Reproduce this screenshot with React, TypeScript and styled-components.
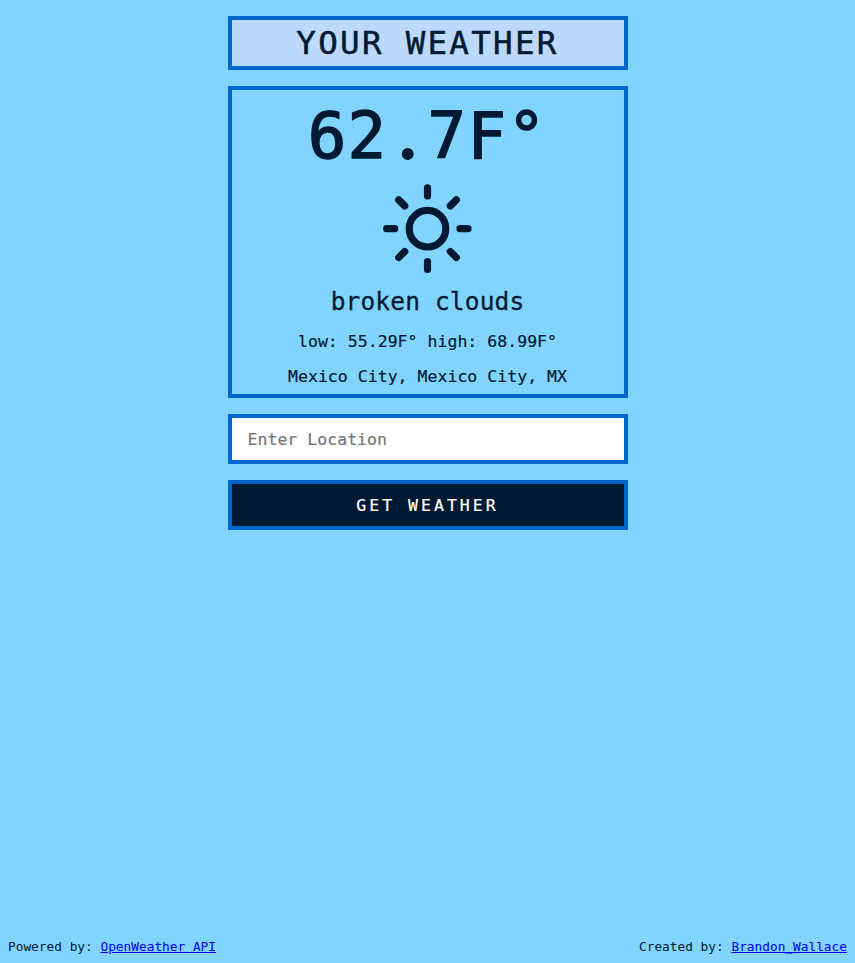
import React from 'react';
import styled, { createGlobalStyle } from 'styled-components';

const GlobalStyle = createGlobalStyle`
  * { box-sizing: border-box; margin: 0; padding: 0; }
  body {
    background: #80d4ff;
    color: #001a33;
    font-family: "DejaVu Sans Mono", monospace;
    font-size: 16px;
  }
`;

const Page = styled.div`
  min-height: 100vh;
  display: flex;
  flex-direction: column;
  justify-content: space-between;
`;

const Main = styled.main`
  width: 400px;
  margin: 16px auto 0;
  display: flex;
  flex-direction: column;
  gap: 16px;
`;

const Title = styled.h1`
  height: 54px;
  border: 4px solid #0066cc;
  background: #bdd9ff;
  font-size: 32.5px;
  line-height: 46px;
  font-weight: 400;
  letter-spacing: 2.3px;
  text-align: center;
  -webkit-text-stroke: 0.5px currentColor;
`;

const Card = styled.section`
  height: 312px;
  border: 4px solid #0066cc;
  display: flex;
  flex-direction: column;
  align-items: center;
`;

const Temperature = styled.p`
  margin-top: 9px;
  font-size: 64px;
  line-height: 75px;
  letter-spacing: 1.4px;
  -webkit-text-stroke: 1.5px currentColor;
`;

const DecimalPoint = styled.span`
  background: radial-gradient(circle at 19.7px 55px, #001a33 5.5px, transparent 6.3px);
  -webkit-text-fill-color: transparent;
  -webkit-text-stroke: 0;
`;

const Sun = styled.svg`
  display: block;
  width: 96px;
  height: 96px;
  margin-top: 7px;
`;

const Description = styled.p`
  margin-top: 9px;
  font-size: 24.5px;
  line-height: 32px;
  letter-spacing: 0.15px;
  -webkit-text-stroke: 0.3px currentColor;
`;

const Detail = styled.p`
  margin-top: 16px;
  font-size: 16.5px;
  line-height: 19px;
  letter-spacing: 0.03px;
  -webkit-text-stroke: 0.2px currentColor;
  &:first-of-type { margin-top: 14px; }
`;

const Details = styled.div`
  display: flex;
  flex-direction: column;
  align-items: center;
`;

const Form = styled.form`
  display: flex;
  flex-direction: column;
  gap: 16px;
`;

const LocationInput = styled.input`
  height: 50px;
  border: 4px solid #0066cc;
  border-radius: 0;
  background: #fff;
  padding: 0 16px;
  font: inherit;
  font-size: 16.5px;
  letter-spacing: 0.03px;
  outline: none;
  -webkit-text-stroke: 0.2px currentColor;
  &::placeholder { color: #757575; }
`;

const SubmitButton = styled.button`
  height: 50px;
  border: 4px solid #0066cc;
  border-radius: 0;
  background: #001a33;
  color: #fff;
  font: inherit;
  font-size: 16.5px;
  letter-spacing: 3px;
  -webkit-text-stroke: 0.2px currentColor;
`;

const Footer = styled.footer`
  display: flex;
  justify-content: space-between;
  padding: 8px;
  font-size: 12.8px;
  line-height: 16px;
`;

const Link = styled.a`
  color: #0000ee;
`;

export default function App() {
  return (
    <Page>
      <GlobalStyle />
      <Main>
        <Title>YOUR WEATHER</Title>
        <Card>
          <Temperature>62<DecimalPoint>.</DecimalPoint>7F°</Temperature>
          <Sun viewBox="0.5 0.3 96 96" fill="none" stroke="#001a33" strokeWidth="7.2" strokeLinecap="round">
            <circle cx="48" cy="48" r="18.3" />
            <path d="M48 7.2v8M48 80.8v8M7.2 48h8M80.5 48h8M19.2 19.2l6 6M70.8 70.8l6 6M76.8 19.2l-6 6M25.2 70.8l-6 6" />
          </Sun>
          <Description>broken clouds</Description>
          <Details>
            <Detail>low: 55.29F° high: 68.99F°</Detail>
            <Detail>Mexico City, Mexico City, MX</Detail>
          </Details>
        </Card>
        <Form onSubmit={(e) => e.preventDefault()}>
          <LocationInput placeholder="Enter Location" />
          <SubmitButton type="submit">GET WEATHER</SubmitButton>
        </Form>
      </Main>
      <Footer>
        <p>Powered by: <Link href="#">OpenWeather API</Link></p>
        <p>Created by: <Link href="#">Brandon_Wallace</Link></p>
      </Footer>
    </Page>
  );
}
